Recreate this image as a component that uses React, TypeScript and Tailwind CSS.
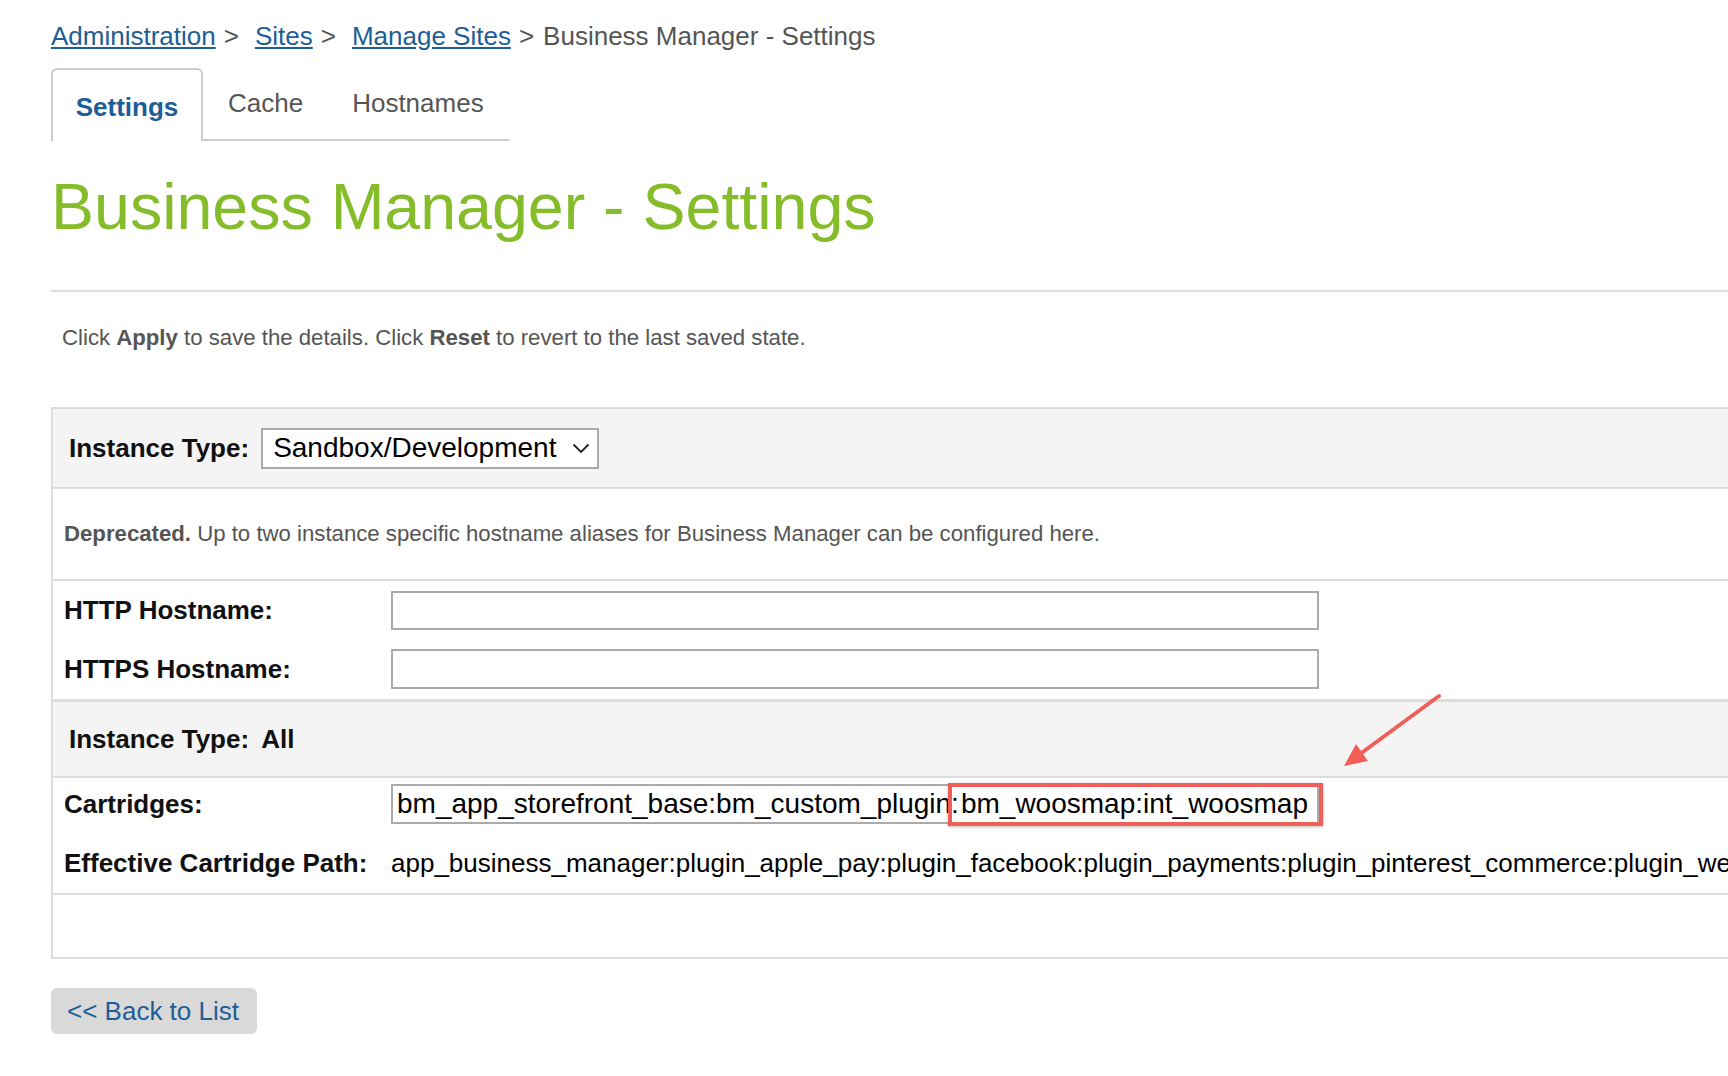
export default function App() {
  const font = { fontFamily: '"Liberation Sans", Arial, sans-serif' };
  return (
    <div style={font} className="relative flex h-[1076px] w-full flex-col overflow-hidden bg-white pl-[51px]">
      {/* breadcrumb */}
      <div className="pt-[21px] text-[26px] leading-[30px] whitespace-nowrap text-[#555]">
        <a className="text-[#1d5e96] underline underline-offset-2">Administration</a>
        <span className="ml-[8px] mr-[16px]">&gt;</span>
        <a className="text-[#1d5e96] underline underline-offset-2">Sites</a>
        <span className="ml-[8px] mr-[16px]">&gt;</span>
        <a className="text-[#1d5e96] underline underline-offset-2">Manage Sites</a>
        <span className="ml-[8px] mr-[9px]">&gt;</span>
        <span>Business Manager - Settings</span>
      </div>

      {/* tabs */}
      <div className="mt-[17px] flex items-end">
        <div className="flex h-[73px] w-[152px] items-center justify-center rounded-t-md border-2 border-b-0 border-[#ccc] pt-[3px] text-[26px] font-bold text-[#1d5e96]">
          Settings
        </div>
        <div className="flex h-[73px] items-center gap-[49px] border-b-2 border-[#ccc] pl-[25px] pr-[25px] text-[26px] text-[#555]">
          <span>Cache</span>
          <span>Hostnames</span>
        </div>
      </div>

      <h1 className="mt-[30px] text-[64.5px] leading-[72px] font-normal text-[#84bc2a]">Business Manager - Settings</h1>

      <div className="mt-[47px] h-[2px] bg-[#ddd]" />

      <p className="mt-[33px] ml-[11px] text-[22.2px] leading-[26px] text-[#555]">
        Click <b>Apply</b> to save the details. Click <b>Reset</b> to revert to the last saved state.
      </p>

      {/* settings table */}
      <div className="mt-[56px] flex flex-col border-y-2 border-l-2 border-[#ddd] text-[26px] text-[#111]">
        <div className="flex h-[78px] items-center bg-[#f4f4f4] pl-[16px]">
          <span className="font-bold">Instance Type:</span>
          <div className="ml-[12px] flex h-[41px] w-[338px] items-center justify-between border-2 border-[#aaa] bg-white pl-[10px] pr-[7px] text-[28px] text-black">
            <span>Sandbox/Development</span>
            <svg width="18" height="11" viewBox="0 0 18 11">
              <polyline points="1.5,1.5 9,9 16.5,1.5" fill="none" stroke="#222" strokeWidth="1.8" />
            </svg>
          </div>
        </div>

        <div className="flex h-[92px] items-center border-t-2 border-[#ddd] pl-[11px] text-[22.2px] text-[#555]">
          <p>
            <b>Deprecated.</b> Up to two instance specific hostname aliases for Business Manager can be configured here.
          </p>
        </div>

        <div className="flex flex-col gap-[19px] border-t-2 border-[#ddd] pt-[10px] pb-[10px] pl-[11px]">
          <div className="flex items-center">
            <span className="w-[327px] font-bold">HTTP Hostname:</span>
            <div className="h-[39px] w-[928px] border-2 border-[#aaa]" />
          </div>
          <div className="flex items-center">
            <span className="w-[327px] font-bold">HTTPS Hostname:</span>
            <div className="h-[40px] w-[928px] border-2 border-[#aaa]" />
          </div>
        </div>

        <div className="flex h-[77px] items-center border-t-[3px] border-[#ddd] bg-[#f4f4f4] pl-[16px] font-bold">
          <span>Instance Type:</span>
          <span className="ml-[12px]">All</span>
        </div>

        <div className="flex flex-col gap-[24px] border-t-2 border-[#ddd] pt-[6px] pb-[15px] pl-[11px]">
          <div className="flex items-center">
            <span className="w-[327px] font-bold">Cartridges:</span>
            <div className="flex h-[40px] w-[928px] items-center border-2 border-[#aaa] pl-[4px] text-[28px] leading-[30px] whitespace-nowrap text-black">
              <span>bm_app_storefront_base:bm_custom_plugin:</span>
              <span className="relative ml-[2px]">
                bm_woosmap:int_woosmap
                <span className="absolute top-[-6px] bottom-[-7px] left-[-13px] right-[-15px] border-4 border-[#ef5f57] shadow-[0_1px_3px_rgba(0,0,0,0.25)]" />
              </span>
            </div>
          </div>
          <div className="flex items-center leading-[30px] whitespace-nowrap">
            <span className="w-[327px] shrink-0 font-bold">Effective Cartridge Path:</span>
            <span className="text-black">
              app_business_manager:plugin_apple_pay:plugin_facebook:plugin_payments:plugin_pinterest_commerce:plugin_web_payments:bm_app_storefront_base:bm_custom_plugin:bm_woosmap:int_woosmap
            </span>
          </div>
        </div>

        <div className="h-[64px] border-t-2 border-[#ddd]" />
      </div>

      <div className="mt-[29px] flex h-[46px] w-[206px] items-center rounded-md bg-[#d9d9d9] pl-[16px] text-[26px] text-[#1d5e96]">
        &lt;&lt; Back to List
      </div>

      {/* annotation arrow */}
      <svg className="absolute top-[690px] left-[1330px]" width="120" height="90" viewBox="0 0 120 90">
        <line x1="109" y1="6" x2="30" y2="64" stroke="#ef5f57" strokeWidth="4" strokeLinecap="round" />
        <polygon points="14,76 38,71 26,54" fill="#ef5f57" />
      </svg>
    </div>
  );
}
